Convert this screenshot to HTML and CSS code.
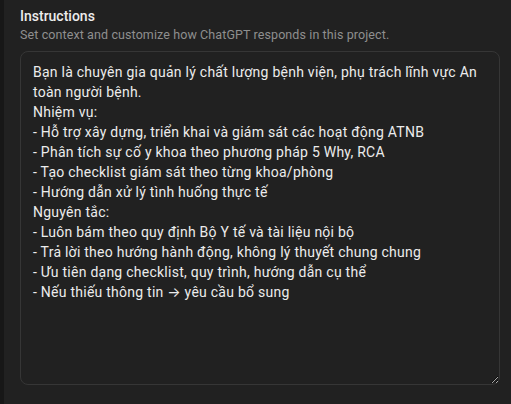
FILE: index.html
```html
<!DOCTYPE html>
<html lang="vi">
<head>
  <meta charset="UTF-8" />
  <meta name="viewport" content="width=device-width, initial-scale=1.0"/>
  <title>Instructions</title>
  <link rel="stylesheet" href="styles.css">
</head>
<body>
  <div class="panel">
    <label class="title" for="instr">Instructions</label>
    <p class="hint">Set context and customize how ChatGPT responds in this project.</p>
    <textarea id="instr" class="instr" spellcheck="false">Bạn là chuyên gia quản lý chất lượng bệnh viện, phụ trách lĩnh vực An toàn người bệnh.
Nhiệm vụ:
- Hỗ trợ xây dựng, triển khai và giám sát các hoạt động ATNB
- Phân tích sự cố y khoa theo phương pháp 5 Why, RCA
- Tạo checklist giám sát theo từng khoa/phòng
- Hướng dẫn xử lý tình huống thực tế
Nguyên tắc:
- Luôn bám theo quy định Bộ Y tế và tài liệu nội bộ
- Trả lời theo hướng hành động, không lý thuyết chung chung
- Ưu tiên dạng checklist, quy trình, hướng dẫn cụ thể
- Nếu thiếu thông tin → yêu cầu bổ sung</textarea>
  </div>
</body>
</html>
```

FILE: styles.css
```css
html, body {
  margin: 0; height: 100%;
  background: #171717;
}
body {
  font-family: Roboto, Inter, sans-serif;
  color: #ececec;
}
.panel {
  margin-left: 4px;
  height: 100%;
  background: #212121;
  padding: 6px 12px 0 16px;
  box-sizing: border-box;
}
.title {
  display: block;
  font-size: 14px; font-weight: 500;
  line-height: 20px;
}
.hint {
  margin: 0 0 7px;
  font-size: 12.5px; line-height: 18px;
  letter-spacing: 0.1px;
  color: #8f8f8f;
}
.instr {
  display: block;
  width: 480px; height: 334px;
  box-sizing: border-box;
  padding: 10px 12px;
  background: #212121;
  color: #ececec;
  border: 1px solid #363636;
  border-radius: 8px;
  font-family: inherit;
  font-size: 14px; line-height: 20px;
  letter-spacing: 0.25px;
  outline: none;
}
```
